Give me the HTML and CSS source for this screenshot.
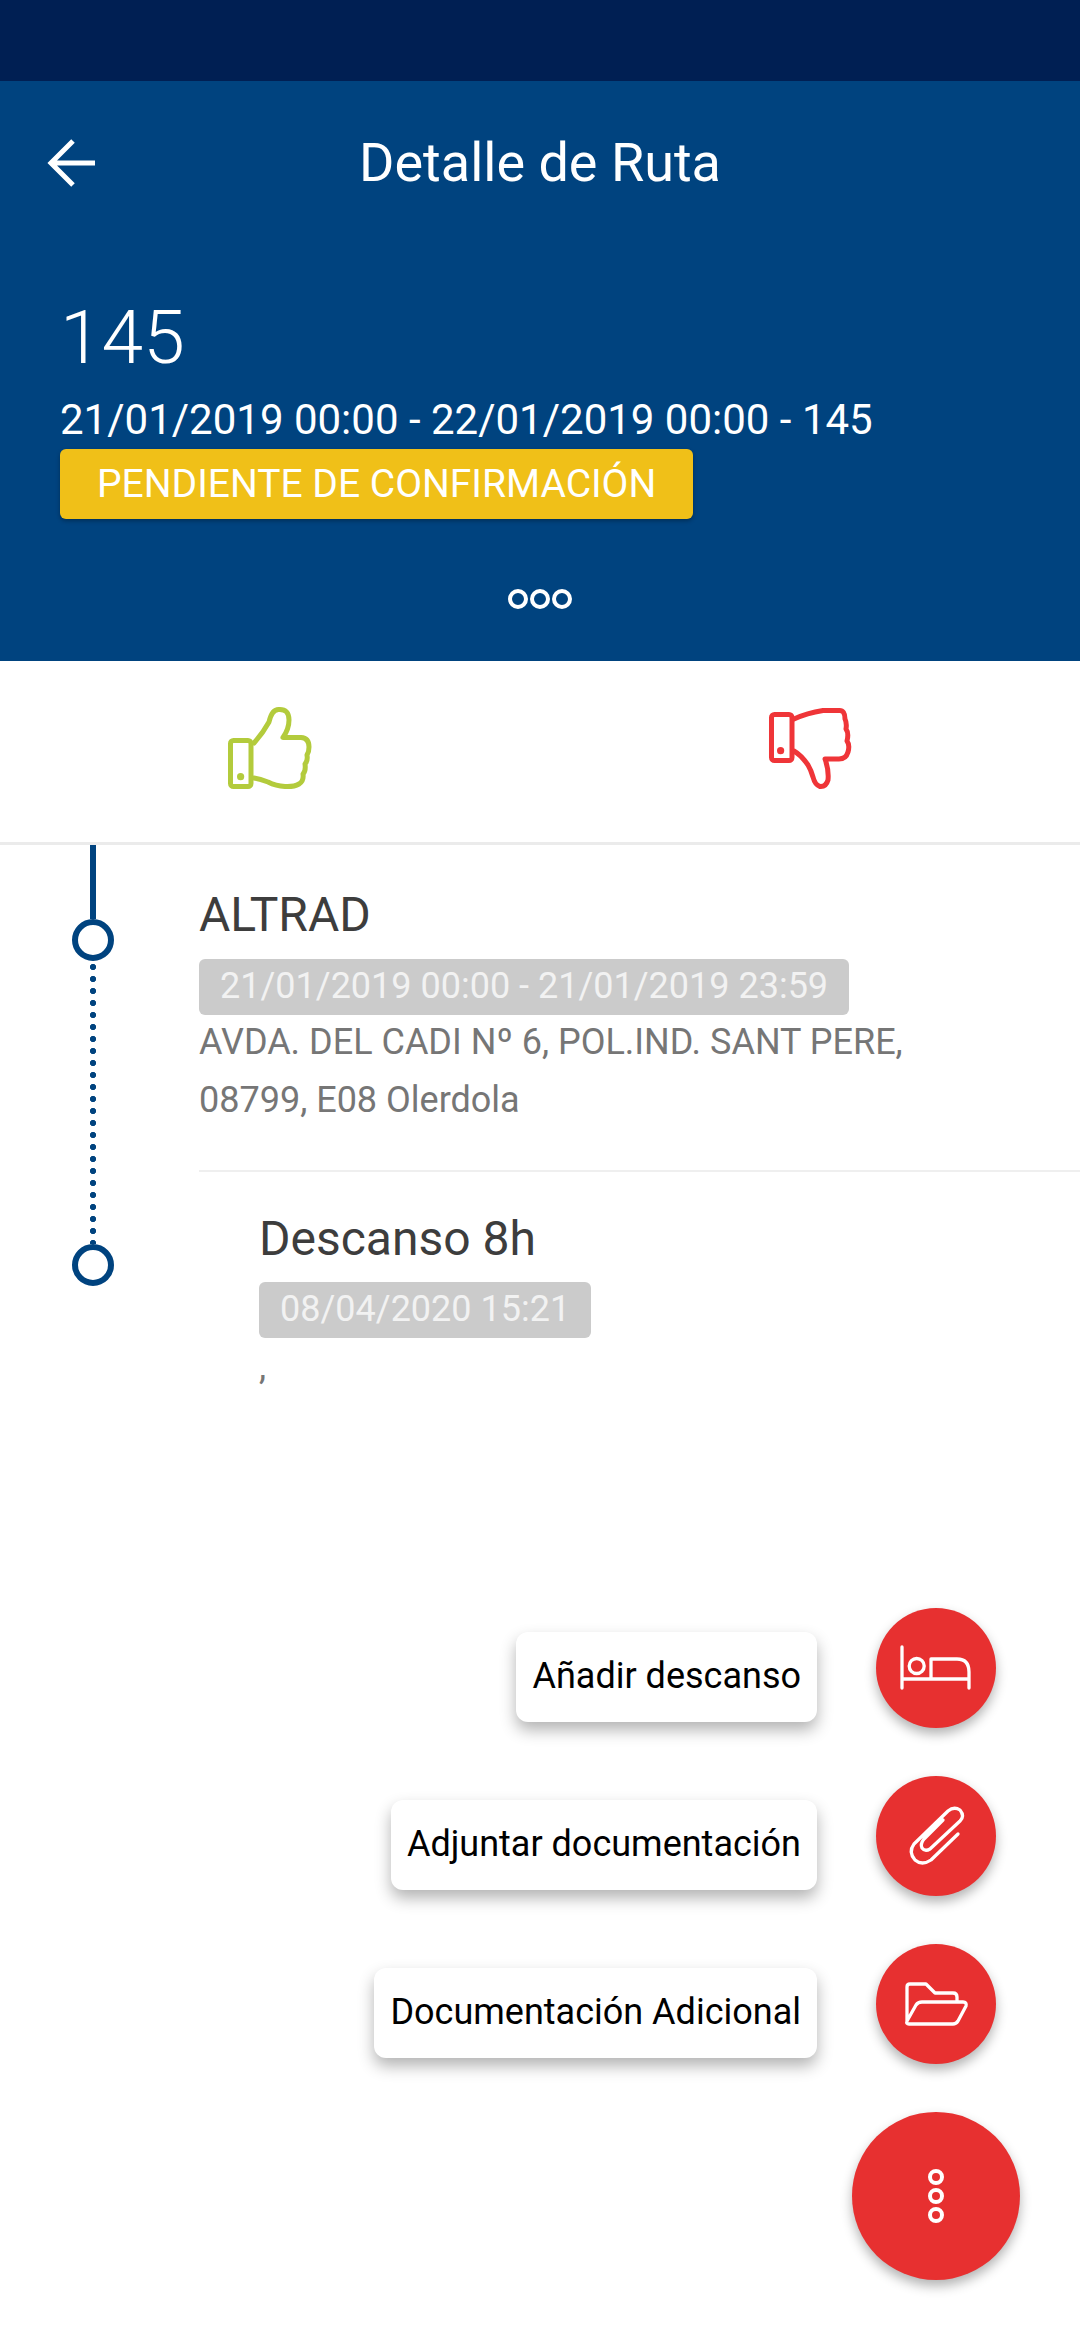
FILE: index.html
```html
<!DOCTYPE html>
<html>
<head>
<meta charset="utf-8">
<title>Detalle de Ruta</title>
<link rel="stylesheet" href="styles.css">
</head>
<body>
<div class="app">
  <div class="status"></div>
  <header class="header">
    <div class="appbar">
      <svg class="back" width="50" height="50" viewBox="0 0 50 50"><path d="M48 25H4M26 3L4 25l22 22"/></svg>
      <h1 class="title">Detalle de Ruta</h1>
    </div>
    <div class="info">
      <div class="number">145</div>
      <div class="dates">21/01/2019 00:00 - 22/01/2019 00:00 - 145</div>
      <div class="state">PENDIENTE DE CONFIRMACIÓN</div>
    </div>
    <div class="more"><span class="ring"></span><span class="ring"></span><span class="ring"></span></div>
  </header>

  <div class="actions">
    <div class="action">
      <svg class="thumb up" width="86" height="86" viewBox="0 0 86 86"><rect x="3.5" y="35.5" width="20.5" height="46" rx="3"/><path d="M27 38Q36 28 42 17Q45 4 52 4.5Q62 4 62 15Q62 24 56 32.5H74Q82 33 82 42Q82 47 80 50Q81 56 78 59Q79 66 76 69Q77 76 72 79Q67 82 58 81.5Q49 81 41 77Q33 74 27 73"/><circle class="pin" cx="13.6" cy="71.7" r="3.6"/></svg>
    </div>
    <div class="action">
      <svg class="thumb down" width="86" height="86" viewBox="0 0 86 86"><rect x="4.5" y="9.5" width="20.5" height="46" rx="3"/><path d="M27 14Q40 8 56 5.5H72Q78 5 78 14Q80 18 79 24Q82 28 80 36Q83 40 81 47Q79 54 72 54H58Q62 65 61 75Q59 82 53 81.5Q48 80 46 72Q44 65 41 60Q34 50 27 46"/><circle class="pin" cx="13.6" cy="45.7" r="3.6"/></svg>
    </div>
  </div>

  <div class="route">
    <div class="rail">
      <div class="line"></div>
      <div class="node"></div>
      <div class="dots"></div>
      <div class="node"></div>
    </div>
    <div class="stops">
      <div class="stop">
        <div class="name">ALTRAD</div>
        <div class="time">21/01/2019 00:00 - 21/01/2019 23:59</div>
        <div class="address">AVDA. DEL CADI Nº 6, POL.IND. SANT PERE,<br>08799, E08 Olerdola</div>
      </div>
      <div class="stop rest">
        <div class="name">Descanso 8h</div>
        <div class="time">08/04/2020 15:21</div>
        <div class="address">,</div>
      </div>
    </div>
  </div>

  <div class="fab-menu">
    <div class="fab-row">
      <div class="fab-label">Añadir descanso</div>
      <div class="fab">
        <svg width="120" height="120" viewBox="0 0 120 120"><path d="M26 39V80M26 71H93M93 80V64Q93 51 81 51H55V71"/><circle cx="40.7" cy="58" r="7.5"/></svg>
      </div>
    </div>
    <div class="fab-row">
      <div class="fab-label">Adjuntar documentación</div>
      <div class="fab">
        <svg width="120" height="120" viewBox="0 0 120 120"><path d="M82 58L55 84Q46 90 39 84Q32 76 38 68L72 35Q78 30 84 34Q89 40 84 45L54 73Q49 76 46 72Q44 68 48 63L67 44"/></svg>
      </div>
    </div>
    <div class="fab-row">
      <div class="fab-label">Documentación Adicional</div>
      <div class="fab">
        <svg width="120" height="120" viewBox="0 0 120 120"><path d="M31 77V43Q31 40 34 40H50L59 49H77Q81 49 81 53V58M33 80H77Q80 80 82 77L90 62Q91 58 87 58H46Q42 58 40 61L31 77Q30 80 33 80Z"/></svg>
      </div>
    </div>
    <div class="fab main">
      <span class="ring"></span><span class="ring"></span><span class="ring"></span>
    </div>
  </div>
</div>
</body>
</html>
```
FILE: styles.css
```css
* { box-sizing: border-box; }
html, body { margin: 0; padding: 0; background: #fff; }
body { font-family: Roboto, "Noto Sans", sans-serif; }

.app { position: relative; width: 1080px; height: 2340px; overflow: hidden; background: #fff; }
.status { height: 81px; background: #001f53; }

/* header */
.header { height: 580px; background: #00437f; color: #fff; }
.appbar { display: grid; grid-template-columns: 1fr auto 1fr; align-items: center; height: 164px; padding-left: 47px; }
.back { fill: none; stroke: #fff; stroke-width: 5; }
.title { grid-column: 2; margin: 0 0 0 -47px; font-size: 54px; line-height: 60px; font-weight: 400; }
.info { padding: 50px 60px 0; }
.number { font-size: 75px; line-height: 84px; font-weight: 300; }
.dates { margin-top: 16px; font-size: 42px; line-height: 50px; }
.state { display: inline-block; margin-top: 4px; padding: 0 37px; height: 70px; line-height: 70px; font-size: 39px; background: #f0c018; border-radius: 6px; box-shadow: 0 2px 4px rgba(0, 0, 0, .3); }
.more { display: flex; justify-content: center; gap: 2px; margin-top: 70px; }
.ring { display: block; width: 20px; height: 20px; border: 4px solid #fff; border-radius: 50%; }

/* thumbs */
.actions { display: flex; height: 184px; border-bottom: 3px solid #ebebeb; }
.action { flex: 1; display: flex; justify-content: center; padding-top: 44px; }
.thumb { fill: none; stroke-width: 5; stroke-linejoin: round; stroke-linecap: round; }
.thumb .pin { stroke: none; }
.up { stroke: #b3cb3c; }
.up .pin { fill: #b3cb3c; }
.down { stroke: #ef3538; }
.down .pin { fill: #ef3538; }

/* timeline */
.route { display: flex; }
.rail { display: flex; flex-direction: column; align-items: center; width: 186px; margin-right: 13px; flex: none; }
.line { width: 6px; height: 74px; background: #00437f; }
.node { flex: none; width: 42px; height: 42px; border: 6px solid #00437f; border-radius: 50%; background: #fff; }
.dots { width: 6px; height: 283px; background: radial-gradient(circle, #00437f 2.8px, transparent 3.4px) 0 0 / 6px 12px repeat-y; }
.stops { flex: 1; }
.stop { padding: 42px 0 41px; border-bottom: 2px solid #efefef; }
.stop.rest { padding: 39px 0 0 60px; border-bottom: 0; }
.name { font-size: 48px; line-height: 56px; color: #3d3d3d; }
.time { display: table; margin-top: 16px; height: 56px; padding: 0 21px; line-height: 54px; font-size: 36px; color: #f2f2f2; background: #cbcbcb; border-radius: 6px; }
.address { margin-top: -2px; font-size: 36px; line-height: 58px; color: #767676; }
.rest .time { margin-top: 15px; }
.rest .address { margin-top: 0; }

/* floating menu */
.fab-menu { position: absolute; right: 60px; bottom: 60px; display: flex; flex-direction: column; align-items: flex-end; }
.fab-row { display: flex; align-items: center; gap: 59px; margin: 0 24px 48px 0; }
.fab-label { height: 90px; margin-top: 18px; padding: 0 16px; line-height: 88px; font-size: 36px; color: #000; background: #fff; border-radius: 12px; box-shadow: 0 8px 16px rgba(0, 0, 0, .3); }
.fab { display: flex; align-items: center; justify-content: center; width: 120px; height: 120px; border-radius: 50%; background: #e73030; box-shadow: 0 6px 12px rgba(0, 0, 0, .3); }
.fab svg { fill: none; stroke: #fff; stroke-width: 3.3; stroke-linecap: round; stroke-linejoin: round; }
.fab.main { flex-direction: column; gap: 3px; width: 168px; height: 168px; }
.fab.main .ring { width: 16px; height: 16px; }
```
